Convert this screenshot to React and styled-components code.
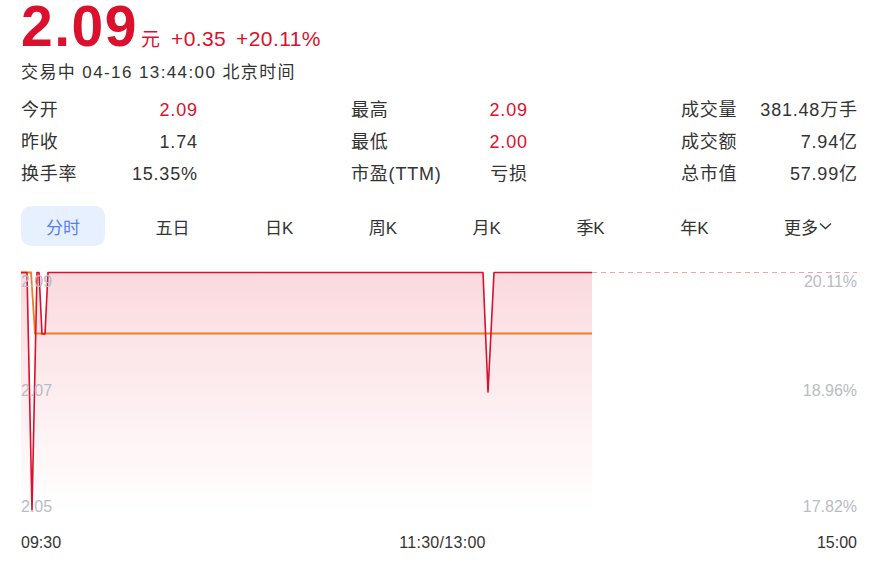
import React from "react";
import styled, { createGlobalStyle } from "styled-components";

const GlobalStyle = createGlobalStyle`
  body {
    margin: 0;
    background: #fff;
    font-family: "Liberation Sans", Arial, "Noto Sans CJK SC", sans-serif;
    color: #333;
  }
`;

const RED = "#dc0f2c";

const Page = styled.div`
  width: 894px;
  padding: 0 37px 0 21px;
  box-sizing: border-box;
`;

const PriceRow = styled.div`
  display: flex;
  align-items: baseline;
  height: 52px;
  color: ${RED};
`;

const BigPrice = styled.span`
  font-size: 57px;
  line-height: 52px;
  font-weight: 700;
  letter-spacing: 1.5px;
`;

const Unit = styled.span`
  font-size: 19px;
  margin: 0 11px 0 3px;
`;

const Change = styled.span`
  font-size: 21px;
  letter-spacing: 0.4px;
  margin-right: 10px;
`;

const Status = styled.div`
  margin-top: 9px;
  font-size: 17px;
  line-height: 24px;
  letter-spacing: 1.4px;
`;

const Stats = styled.div`
  margin-top: 9px;
  display: flex;
  justify-content: space-between;
`;

const StatCol = styled.div`
  width: 176px;
`;

const StatRow = styled.div`
  display: flex;
  justify-content: space-between;
  font-size: 18px;
  line-height: 32px;
  letter-spacing: 0.8px;
`;

const StatValue = styled.span`
  margin-right: -0.8px;
  color: ${(p) => (p.$red ? RED : "#333")};
`;

const Tabs = styled.div`
  margin-top: 16px;
  display: flex;
  justify-content: space-between;
`;

const Tab = styled.div`
  height: 40px;
  padding: 0 25px;
  border-radius: 10px;
  display: flex;
  align-items: center;
  font-size: 17px;
  color: ${(p) => (p.$active ? "#5b7ff2" : "#333")};
  background: ${(p) => (p.$active ? "#e6f0fe" : "transparent")};
`;

const Chart = styled.div`
  position: relative;
  margin-top: 25px;
  height: 240px;
`;

const ChartSvg = styled.svg`
  display: block;
  overflow: visible;
`;

const AxisLabel = styled.span`
  position: absolute;
  font-size: 16px;
  line-height: 16px;
  color: #b8bcc4;
  ${(p) => (p.$right ? "right: 0;" : "left: 0;")}
`;

const TimeAxis = styled.div`
  margin-top: 22px;
  display: flex;
  justify-content: space-between;
  font-size: 16px;
  line-height: 20px;
  color: #333;
`;

const MidTime = styled.span`
  margin-left: 7px;
  letter-spacing: 0.3px;
`;

const stats = [
  [
    ["今开", "2.09", true],
    ["昨收", "1.74"],
    ["换手率", "15.35%"],
  ],
  [
    ["最高", "2.09", true],
    ["最低", "2.00", true],
    ["市盈(TTM)", "亏损"],
  ],
  [
    ["成交量", "381.48万手"],
    ["成交额", "7.94亿"],
    ["总市值", "57.99亿"],
  ],
];

const tabs = ["分时", "五日", "日K", "周K", "月K", "季K", "年K"];

// price line points, chart is 836 x 240
const pricePts = [
  [0, 1.5], [6, 1.5], [11, 239], [16, 1.5], [18, 1.5], [21, 63], [24, 63],
  [27, 1.5], [462, 1.5], [467, 121], [473, 1.5], [571, 1.5],
];
const avgPts = [[0, 1.5], [10, 1.5], [14, 62.5], [571, 62.5]];

const toLine = (pts) => pts.map(([x, y]) => `${x},${y}`).join(" ");

function MinuteChart() {
  const area = `M0,240 L${pricePts.map(([x, y]) => `${x},${y}`).join(" L")} L571,240 Z`;
  return (
    <Chart>
      <ChartSvg width="836" height="240" viewBox="0 0 836 240">
        <defs>
          <linearGradient id="fill" x1="0" y1="0" x2="0" y2="1">
            <stop offset="0" stopColor="#e8455c" stopOpacity="0.2" />
            <stop offset="1" stopColor="#e8455c" stopOpacity="0" />
          </linearGradient>
        </defs>
        <path d={area} fill="url(#fill)" />
        <line x1="571" y1="1.5" x2="836" y2="1.5" stroke="#f2a3aa" strokeWidth="1.2" strokeDasharray="5 4" />
        <polyline points={toLine(avgPts)} fill="none" stroke="#f47c1c" strokeWidth="1.8" />
        <polyline points={toLine(pricePts)} fill="none" stroke={RED} strokeWidth="1.6" strokeLinejoin="round" />
      </ChartSvg>
      <AxisLabel style={{ top: 3 }}>2.09</AxisLabel>
      <AxisLabel style={{ top: 112 }}>2.07</AxisLabel>
      <AxisLabel style={{ top: 228 }}>2.05</AxisLabel>
      <AxisLabel $right style={{ top: 3 }}>20.11%</AxisLabel>
      <AxisLabel $right style={{ top: 112 }}>18.96%</AxisLabel>
      <AxisLabel $right style={{ top: 228 }}>17.82%</AxisLabel>
    </Chart>
  );
}

export default function App() {
  return (
    <Page>
      <GlobalStyle />
      <PriceRow>
        <BigPrice>2.09</BigPrice>
        <Unit>元</Unit>
        <Change>+0.35</Change>
        <Change>+20.11%</Change>
      </PriceRow>
      <Status>交易中 04-16 13:44:00 北京时间</Status>
      <Stats>
        {stats.map((col, i) => (
          <StatCol key={i}>
            {col.map(([label, value, red]) => (
              <StatRow key={label}>
                <span>{label}</span>
                <StatValue $red={red}>{value}</StatValue>
              </StatRow>
            ))}
          </StatCol>
        ))}
      </Stats>
      <Tabs>
        {tabs.map((t, i) => (
          <Tab key={t} $active={i === 0}>{t}</Tab>
        ))}
        <Tab>
          更多
          <svg width="13" height="8" viewBox="0 0 13 8" style={{ marginLeft: 1 }}>
            <polyline points="1,1.5 6.5,6.5 12,1.5" fill="none" stroke="#333" strokeWidth="1.3" />
          </svg>
        </Tab>
      </Tabs>
      <MinuteChart />
      <TimeAxis>
        <span>09:30</span>
        <MidTime>11:30/13:00</MidTime>
        <span>15:00</span>
      </TimeAxis>
    </Page>
  );
}
